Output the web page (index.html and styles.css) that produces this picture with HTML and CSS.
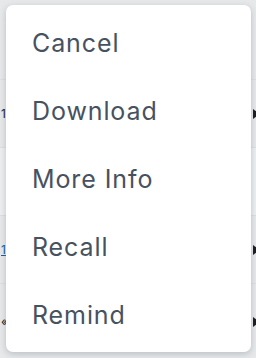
FILE: index.html
```
<!DOCTYPE html>
<html lang="en">
<head>
  <meta charset="UTF-8">
  <meta name="viewport" content="width=device-width, initial-scale=1.0">
  <title>Actions Menu</title>
  <link rel="stylesheet" href="styles.css">
</head>
<body>
  <div class="table">
    <div class="row row-top"></div>
    <div class="row">
      <span class="cell-text">1</span>
      <span class="caret"></span>
    </div>
    <div class="row row-light"></div>
    <div class="row">
      <a class="cell-link" href="#">1</a>
      <span class="caret"></span>
    </div>
    <div class="row row-short">
      <span class="cell-text">«</span>
      <span class="caret"></span>
    </div>
  </div>

  <ul class="menu">
    <li class="menu-item">Cancel</li>
    <li class="menu-item">Download</li>
    <li class="menu-item">More Info</li>
    <li class="menu-item">Recall</li>
    <li class="menu-item">Remind</li>
  </ul>
</body>
</html>
```

FILE: styles.css
```
/* Reset */
* {
  margin: 0;
  padding: 0;
  box-sizing: border-box;
}
body {
  width: 256px;
  height: 358px;
  overflow: hidden;
  position: relative;
  background: #e6e8ea;
  font-family: 'Inter', 'DejaVu Sans', sans-serif;
}

/* Background table rows */
.table {
  display: flex;
  flex-direction: column;
}
.row {
  height: 68px;
  display: flex;
  align-items: center;
  justify-content: space-between;
  border-bottom: 1px solid #dcdfe2;
}
.row-top {
  height: 80px;
}
.row-light {
  background: #eceef0;
}
.row-short {
  height: 76px;
}
.cell-text {
  margin-left: 1px;
  font-size: 12px;
  color: #222;
}
.cell-link {
  margin-left: 1px;
  font-size: 12px;
  color: #1a5fa0;
}
.caret {
  width: 0;
  height: 0;
  margin-right: -4px;
  border-top: 5px solid transparent;
  border-bottom: 5px solid transparent;
  border-left: 7px solid #1b1f23;
}

/* Dropdown menu */
.menu {
  position: absolute;
  top: 5px;
  left: 6px;
  width: 245px;
  height: 347px;
  list-style: none;
  background: #fff;
  border-radius: 7px;
  padding: 4px 0;
  box-shadow: 0 2px 6px rgba(60, 70, 80, 0.25);
}
.menu-item {
  height: 68px;
  display: flex;
  align-items: center;
  padding-left: 26px;
  font-size: 25px;
  letter-spacing: 0.9px;
  color: #475260;
  cursor: pointer;
}
.menu-item:hover {
  background: #f3f5f7;
}
```
